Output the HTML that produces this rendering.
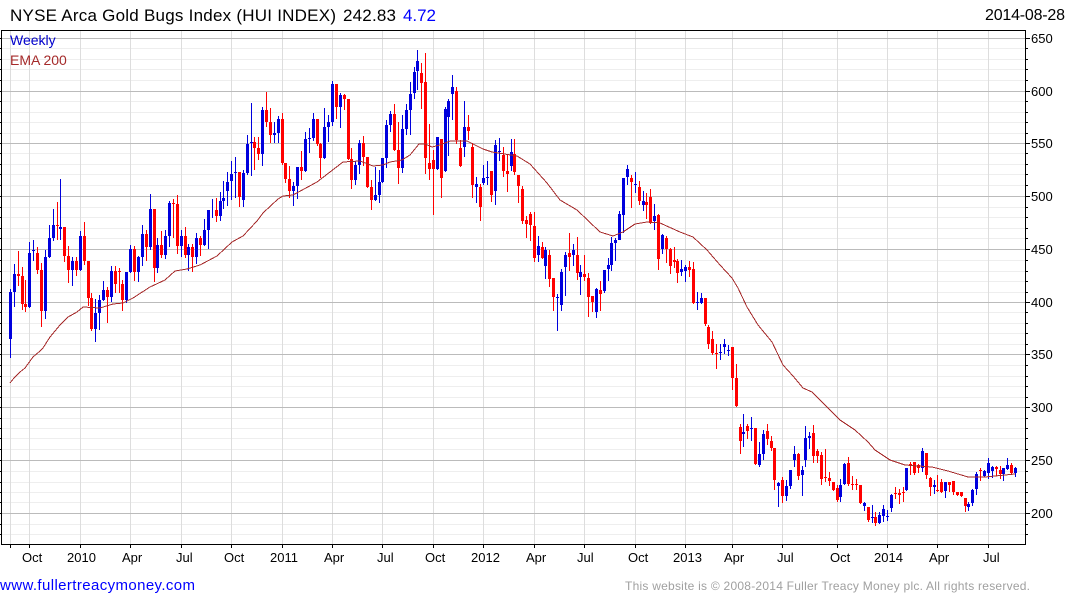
<!DOCTYPE html>
<html>
<head>
<meta charset="utf-8">
<title>NYSE Arca Gold Bugs Index</title>
<style>
html,body{margin:0;padding:0;background:#fff;width:1075px;height:600px;overflow:hidden}
svg{display:block}
text{font-family:"Liberation Sans",Arial,sans-serif}
</style>
</head>
<body>
<svg xmlns="http://www.w3.org/2000/svg" width="1075" height="600" viewBox="0 0 1075 600">
<rect width="1075" height="600" fill="#fff"/>
<g shape-rendering="crispEdges" fill="none">
<path stroke="#eeeeee" d="M2 48.5H1025M2 59.5H1025M2 69.5H1025M2 80.5H1025M2 101.5H1025M2 112.5H1025M2 122.5H1025M2 133.5H1025M2 153.5H1025M2 164.5H1025M2 174.5H1025M2 185.5H1025M2 207.5H1025M2 217.5H1025M2 228.5H1025M2 238.5H1025M2 260.5H1025M2 271.5H1025M2 281.5H1025M2 292.5H1025M2 312.5H1025M2 323.5H1025M2 333.5H1025M2 344.5H1025M2 365.5H1025M2 376.5H1025M2 386.5H1025M2 397.5H1025M2 418.5H1025M2 428.5H1025M2 438.5H1025M2 449.5H1025M2 471.5H1025M2 482.5H1025M2 492.5H1025M2 502.5H1025M2 524.5H1025M2 534.5H1025"/>
<path stroke="#dddddd" d="M10.5 31V544M29.5 31V544M80.5 31V544M130.5 31V544M181.5 31V544M231.5 31V544M282.5 31V544M332.5 31V544M382.5 31V544M433.5 31V544M483.5 31V544M534.5 31V544M584.5 31V544M635.5 31V544M685.5 31V544M732.5 31V544M782.5 31V544M837.5 31V544M887.5 31V544M937.5 31V544M988.5 31V544"/>
<path stroke="#bbbbbb" d="M2 38.5H1025M2 91.5H1025M2 143.5H1025M2 196.5H1025M2 249.5H1025M2 302.5H1025M2 354.5H1025M2 407.5H1025M2 460.5H1025M2 513.5H1025"/>
<path stroke="#0000dd" d="M10.5 289V358M14.5 264V307M29.5 242V308M33.5 240V261M45.5 250V319M49.5 225V258M53.5 209V241M60.5 179V240M72.5 257V286M80.5 231V271M95.5 299V342M99.5 295V330M103.5 281V301M111.5 266V302M126.5 272V303M130.5 245V273M138.5 256V282M142.5 225V266M150.5 194V250M157.5 238V273M165.5 230V259M169.5 201V247M181.5 230V257M188.5 244V271M196.5 233V264M204.5 219V246M208.5 210V249M212.5 199V218M220.5 192V221M223.5 181V209M227.5 172V206M231.5 161V200M235.5 157V198M243.5 170V207M247.5 135V175M251.5 103V176M262.5 107V166M274.5 122V143M278.5 116V143M293.5 182V206M297.5 167V199M305.5 132V172M309.5 128V153M313.5 113V141M324.5 108V159M328.5 115V142M332.5 81V126M340.5 93V128M355.5 161V185M359.5 140V174M375.5 167V201M379.5 170V203M382.5 158V183M386.5 120V168M390.5 111V132M402.5 115V173M406.5 104V135M410.5 82V135M414.5 67V99M417.5 50V90M437.5 137V170M445.5 107V172M448.5 99V156M452.5 75V120M464.5 101V157M476.5 177V203M483.5 165V185M487.5 161V185M495.5 140V205M499.5 138V161M511.5 139V171M538.5 236V262M545.5 247V279M557.5 294V331M561.5 269V311M565.5 252V296M573.5 244V266M580.5 265V295M596.5 288V318M604.5 270V293M608.5 258V281M611.5 237V271M615.5 238V261M619.5 211V240M623.5 178V233M627.5 165V185M635.5 172V193M643.5 191V211M654.5 204V230M662.5 234V254M681.5 260V276M685.5 265V282M697.5 292V310M701.5 293V304M720.5 344V360M724.5 339V354M728.5 345V356M743.5 414V447M751.5 417V441M759.5 442V467M763.5 430V460M778.5 482V507M786.5 480V501M790.5 470V489M794.5 446V467M802.5 466V496M805.5 426V467M809.5 432V449M840.5 479V502M844.5 463V485M864.5 502V511M872.5 505V523M879.5 512V524M883.5 505V522M887.5 510V521M891.5 494V512M906.5 468V491M922.5 448V472M934.5 480V494M945.5 482V498M968.5 502V511M972.5 489V506M976.5 472V495M984.5 470V477M988.5 458V479M992.5 466V478M1003.5 468V481M1007.5 458V470M1015.5 467V477"/>
<path stroke="#0000dd" stroke-width="3" d="M10.5 292V339M14.5 274V292M29.5 253V307M33.5 250V251M45.5 257V311M49.5 238V257M53.5 225V238M60.5 227V229M72.5 261V270M80.5 236V270M95.5 313V329M99.5 300V313M103.5 290V300M111.5 271V297M126.5 272V300M130.5 249V272M138.5 257V272M142.5 234V257M150.5 209V247M157.5 245V268M165.5 236V255M169.5 203V236M181.5 236V246M188.5 247V255M196.5 238V257M204.5 230V245M208.5 210V230M220.5 201V216M223.5 198V201M227.5 182V191M231.5 174V181M235.5 172V173M243.5 173V200M247.5 144V173M251.5 142V143M262.5 110V154M274.5 133V135M278.5 119V133M293.5 186V191M297.5 167V186M305.5 139V171M309.5 138V139M313.5 119V138M324.5 127V158M328.5 122V127M332.5 84V122M340.5 95V107M355.5 165V180M359.5 143V165M375.5 195V200M379.5 182V195M382.5 158V182M386.5 125V158M390.5 114V125M402.5 129V168M406.5 110V129M410.5 94V110M414.5 72V93M417.5 61V71M437.5 137V169M445.5 109V171M448.5 101V117M452.5 87V94M464.5 127V147M476.5 184V187M483.5 178V183M487.5 177V178M495.5 145V191M499.5 151V152M511.5 152V166M538.5 246V255M545.5 250V266M557.5 297V298M561.5 272V305M565.5 255V267M573.5 250V255M580.5 272V277M596.5 289V312M604.5 270V291M608.5 265V269M611.5 243V265M615.5 240V243M619.5 214V240M623.5 178V215M627.5 169V177M635.5 184V185M643.5 201V205M654.5 216V221M662.5 235V249M681.5 269V272M685.5 267V271M697.5 302V303M701.5 298V303M720.5 352V353M724.5 344V347M728.5 350V351M743.5 432V434M751.5 428V429M759.5 454V465M763.5 434V454M778.5 483V486M786.5 486V496M790.5 470V486M794.5 454V460M802.5 470V475M805.5 438V460M809.5 436V438M840.5 485V497M844.5 464V484M864.5 503V506M872.5 517V518M879.5 515V523M883.5 509V516M887.5 516V517M891.5 495V508M906.5 468V490M922.5 451V468M934.5 485V487M945.5 482V491M968.5 504V507M972.5 490V503M976.5 474V489M984.5 471V476M988.5 463V473M992.5 467V471M1003.5 468V474M1007.5 465V469M1015.5 468V473"/>
<path stroke="#ff0000" d="M18.5 251V286M22.5 267V310M25.5 280V312M37.5 247V274M41.5 263V327M57.5 202V240M64.5 227V262M68.5 246V283M76.5 257V276M84.5 222V265M88.5 261V306M91.5 293V331M107.5 287V323M115.5 266V293M119.5 268V293M122.5 280V311M134.5 246V281M146.5 230V261M154.5 209V282M161.5 231V258M173.5 199V238M177.5 195V254M185.5 227V258M192.5 244V272M200.5 236V256M216.5 198V222M239.5 172V207M254.5 137V170M258.5 137V160M266.5 92V127M270.5 108V143M282.5 113V165M285.5 163V183M289.5 166V198M301.5 151V180M317.5 119V146M320.5 143V178M336.5 84V119M344.5 94V110M348.5 99V160M351.5 148V189M363.5 136V166M367.5 157V188M371.5 180V210M394.5 104V151M398.5 122V184M421.5 63V109M425.5 53V174M429.5 124V180M433.5 150V215M441.5 139V198M456.5 87V144M460.5 140V167M468.5 115V140M472.5 143V198M480.5 184V221M491.5 171V202M503.5 147V177M507.5 155V192M514.5 139V175M518.5 175V203M522.5 186V224M526.5 216V238M530.5 212V241M534.5 212V262M542.5 242V259M549.5 250V287M553.5 278V311M569.5 233V271M577.5 237V280M584.5 255V281M588.5 273V317M592.5 296V312M600.5 281V311M631.5 175V208M639.5 181V205M646.5 193V219M650.5 189V224M658.5 214V270M666.5 236V263M670.5 248V274M674.5 247V268M677.5 259V283M689.5 261V277M693.5 262V304M705.5 298V326M708.5 325V349M712.5 331V355M716.5 344V369M732.5 347V390M736.5 364V407M740.5 424V454M747.5 424V439M755.5 428V465M767.5 424V445M771.5 436V451M774.5 448V490M782.5 477V503M798.5 453V480M813.5 425V463M817.5 449V463M821.5 452V485M825.5 449V482M829.5 472V486M833.5 482V491M837.5 485V502M848.5 457V486M852.5 476V490M856.5 479V490M860.5 485V504M868.5 507V522M875.5 512V526M895.5 487V499M899.5 489V504M903.5 487V502M910.5 462V475M914.5 462V475M918.5 464V473M926.5 453V479M930.5 477V496M937.5 475V492M941.5 479V493M949.5 482V492M953.5 481V495M957.5 492V496M961.5 492V497M965.5 498V512M980.5 468V481M996.5 466V476M1000.5 466V479M1011.5 463V474"/>
<path stroke="#ff0000" stroke-width="3" d="M18.5 274V276M22.5 276V304M25.5 304V307M37.5 253V270M41.5 270V311M57.5 225V226M64.5 227V256M68.5 256V270M76.5 261V270M84.5 236V261M88.5 261V298M91.5 298V329M107.5 290V297M115.5 271V284M119.5 271V272M122.5 284V300M134.5 249V272M146.5 234V247M154.5 209V268M161.5 245V255M173.5 203V204M177.5 204V246M185.5 236V255M192.5 247V257M200.5 238V245M216.5 210V216M239.5 172V197M254.5 142V148M258.5 148V154M266.5 110V122M270.5 122V135M282.5 119V163M285.5 163V179M289.5 179V191M301.5 167V171M317.5 119V144M320.5 144V158M336.5 84V107M344.5 95V99M348.5 99V159M351.5 159V180M363.5 143V157M367.5 157V187M371.5 187V200M394.5 114V150M398.5 150V168M421.5 73V83M425.5 82V158M429.5 163V169M433.5 160V169M441.5 139V178M456.5 91V140M460.5 148V166M468.5 127V131M472.5 147V185M480.5 187V207M491.5 171V195M503.5 155V171M507.5 171V174M514.5 154V172M518.5 175V186M522.5 189V221M526.5 220V224M530.5 214V225M534.5 226V258M542.5 247V258M549.5 255V279M553.5 278V297M569.5 253V257M577.5 255V273M584.5 274V277M588.5 278V297M592.5 296V302M600.5 290V294M631.5 178V182M639.5 187V201M646.5 202V205M650.5 197V223M658.5 215V259M666.5 238V249M670.5 249V266M674.5 260V262M677.5 261V273M689.5 267V270M693.5 269V303M705.5 298V324M708.5 327V344M712.5 339V353M716.5 353V354M732.5 347V378M736.5 378V406M740.5 427V441M747.5 426V431M755.5 428V464M767.5 431V439M771.5 441V448M774.5 448V480M782.5 480V496M798.5 454V476M813.5 433V456M817.5 451V456M821.5 455V479M825.5 477V478M829.5 478V481M833.5 482V490M837.5 488V500M848.5 463V484M852.5 484V485M856.5 484V485M860.5 485V503M868.5 507V520M875.5 517V523M895.5 493V494M899.5 493V495M903.5 492V493M910.5 464V465M914.5 462V473M918.5 465V468M926.5 453V475M930.5 478V487M937.5 490V491M941.5 482V492M949.5 482V485M953.5 481V492M957.5 492V495M961.5 492V496M965.5 498V506M980.5 470V471M996.5 467V469M1000.5 470V474M1011.5 465V473"/>
<polyline stroke="#a52a2a" stroke-width="1" points="10,383 14,378 20,372 25,368 33,357 40,351 43,348 50,337 60,325 68,317 77,312 83,307 100,308 113,304 123,303 133,298 150,287 165,280 175,271 187,269 200,265 217,256 232,242 243,236 257,221 263,213 278,199 283,196 293,195 317,182 330,172 343,162 360,161 373,166 383,165 390,162 402,160 410,155 419,144 425,144 432,147 440,145 450,141 467,141 483,149 492,152 517,156 530,164 547,183 560,200 577,210 600,232 613,236 623,232 635,224 647,222 660,223 680,232 693,237 707,250 720,265 732,278 738,288 747,307 758,325 772,342 783,365 793,376 803,388 812,392 820,400 840,420 855,430 868,442 875,450 890,460 905,465 932,467 948,471 968,477 985,477 1015,474"/>
<path stroke="#000" d="M1 30.5H1026M1.5 30V545M1025.5 30V545M1 544.5H1026"/>
<path stroke="#000" d="M0 48.5H1M0 59.5H1M0 69.5H1M0 80.5H1M0 101.5H1M0 112.5H1M0 122.5H1M0 133.5H1M0 153.5H1M0 164.5H1M0 174.5H1M0 185.5H1M0 207.5H1M0 217.5H1M0 228.5H1M0 238.5H1M0 260.5H1M0 271.5H1M0 281.5H1M0 292.5H1M0 312.5H1M0 323.5H1M0 333.5H1M0 344.5H1M0 365.5H1M0 376.5H1M0 386.5H1M0 397.5H1M0 418.5H1M0 428.5H1M0 438.5H1M0 449.5H1M0 471.5H1M0 482.5H1M0 492.5H1M0 502.5H1M0 524.5H1M0 534.5H1M0 38.5H1M0 91.5H1M0 143.5H1M0 196.5H1M0 249.5H1M0 302.5H1M0 354.5H1M0 407.5H1M0 460.5H1M0 513.5H1"/>
<path stroke="#000" d="M1026 48.5H1028M1026 59.5H1028M1026 69.5H1028M1026 80.5H1028M1026 101.5H1028M1026 112.5H1028M1026 122.5H1028M1026 133.5H1028M1026 153.5H1028M1026 164.5H1028M1026 174.5H1028M1026 185.5H1028M1026 207.5H1028M1026 217.5H1028M1026 228.5H1028M1026 238.5H1028M1026 260.5H1028M1026 271.5H1028M1026 281.5H1028M1026 292.5H1028M1026 312.5H1028M1026 323.5H1028M1026 333.5H1028M1026 344.5H1028M1026 365.5H1028M1026 376.5H1028M1026 386.5H1028M1026 397.5H1028M1026 418.5H1028M1026 428.5H1028M1026 438.5H1028M1026 449.5H1028M1026 471.5H1028M1026 482.5H1028M1026 492.5H1028M1026 502.5H1028M1026 524.5H1028M1026 534.5H1028M1026 38.5H1030M1026 91.5H1030M1026 143.5H1030M1026 196.5H1030M1026 249.5H1030M1026 302.5H1030M1026 354.5H1030M1026 407.5H1030M1026 460.5H1030M1026 513.5H1030"/>
<path stroke="#000" d="M10.5 545V548M29.5 545V548M80.5 545V548M130.5 545V548M181.5 545V548M231.5 545V548M282.5 545V548M332.5 545V548M382.5 545V548M433.5 545V548M483.5 545V548M534.5 545V548M584.5 545V548M635.5 545V548M685.5 545V548M732.5 545V548M782.5 545V548M837.5 545V548M887.5 545V548M937.5 545V548M988.5 545V548"/>
</g>

<text x="10" y="21" font-size="17" fill="#000" textLength="326">NYSE Arca Gold Bugs Index (HUI INDEX)</text>
<text x="343" y="21" font-size="17" fill="#000" textLength="53">242.83</text>
<text x="403" y="21" font-size="17" fill="#0000ff" textLength="33">4.72</text>
<text x="985" y="20" font-size="16" fill="#000" textLength="80">2014-08-28</text>

<text x="10" y="45" font-size="14" fill="#0000cc">Weekly</text>
<text x="10" y="65" font-size="14" fill="#a52a2a">EMA 200</text>

<g font-size="13" fill="#000">
<text x="1031" y="43">650</text>
<text x="1031" y="96">600</text>
<text x="1031" y="148">550</text>
<text x="1031" y="201">500</text>
<text x="1031" y="254">450</text>
<text x="1031" y="307">400</text>
<text x="1031" y="359">350</text>
<text x="1031" y="412">300</text>
<text x="1031" y="465">250</text>
<text x="1031" y="518">200</text>

<text x="22" y="562">Oct</text>
<text x="67" y="562">2010</text>
<text x="122" y="562">Apr</text>
<text x="176" y="562">Jul</text>
<text x="224" y="562">Oct</text>
<text x="270" y="562">2011</text>
<text x="324" y="562">Apr</text>
<text x="377" y="562">Jul</text>
<text x="425" y="562">Oct</text>
<text x="471" y="562">2012</text>
<text x="526" y="562">Apr</text>
<text x="577" y="562">Jul</text>
<text x="628" y="562">Oct</text>
<text x="673" y="562">2013</text>
<text x="724" y="562">Apr</text>
<text x="777" y="562">Jul</text>
<text x="830" y="562">Oct</text>
<text x="874" y="562">2014</text>
<text x="929" y="562">Apr</text>
<text x="983" y="562">Jul</text>
</g>

<text x="0" y="590" font-size="15" fill="#0000ff" textLength="195">www.fullertreacymoney.com</text>
<text x="625" y="590" font-size="12" fill="#a0a0a0" textLength="405">This website is © 2008-2014 Fuller Treacy Money plc. All rights reserved.</text>
</svg>
</body>
</html>
